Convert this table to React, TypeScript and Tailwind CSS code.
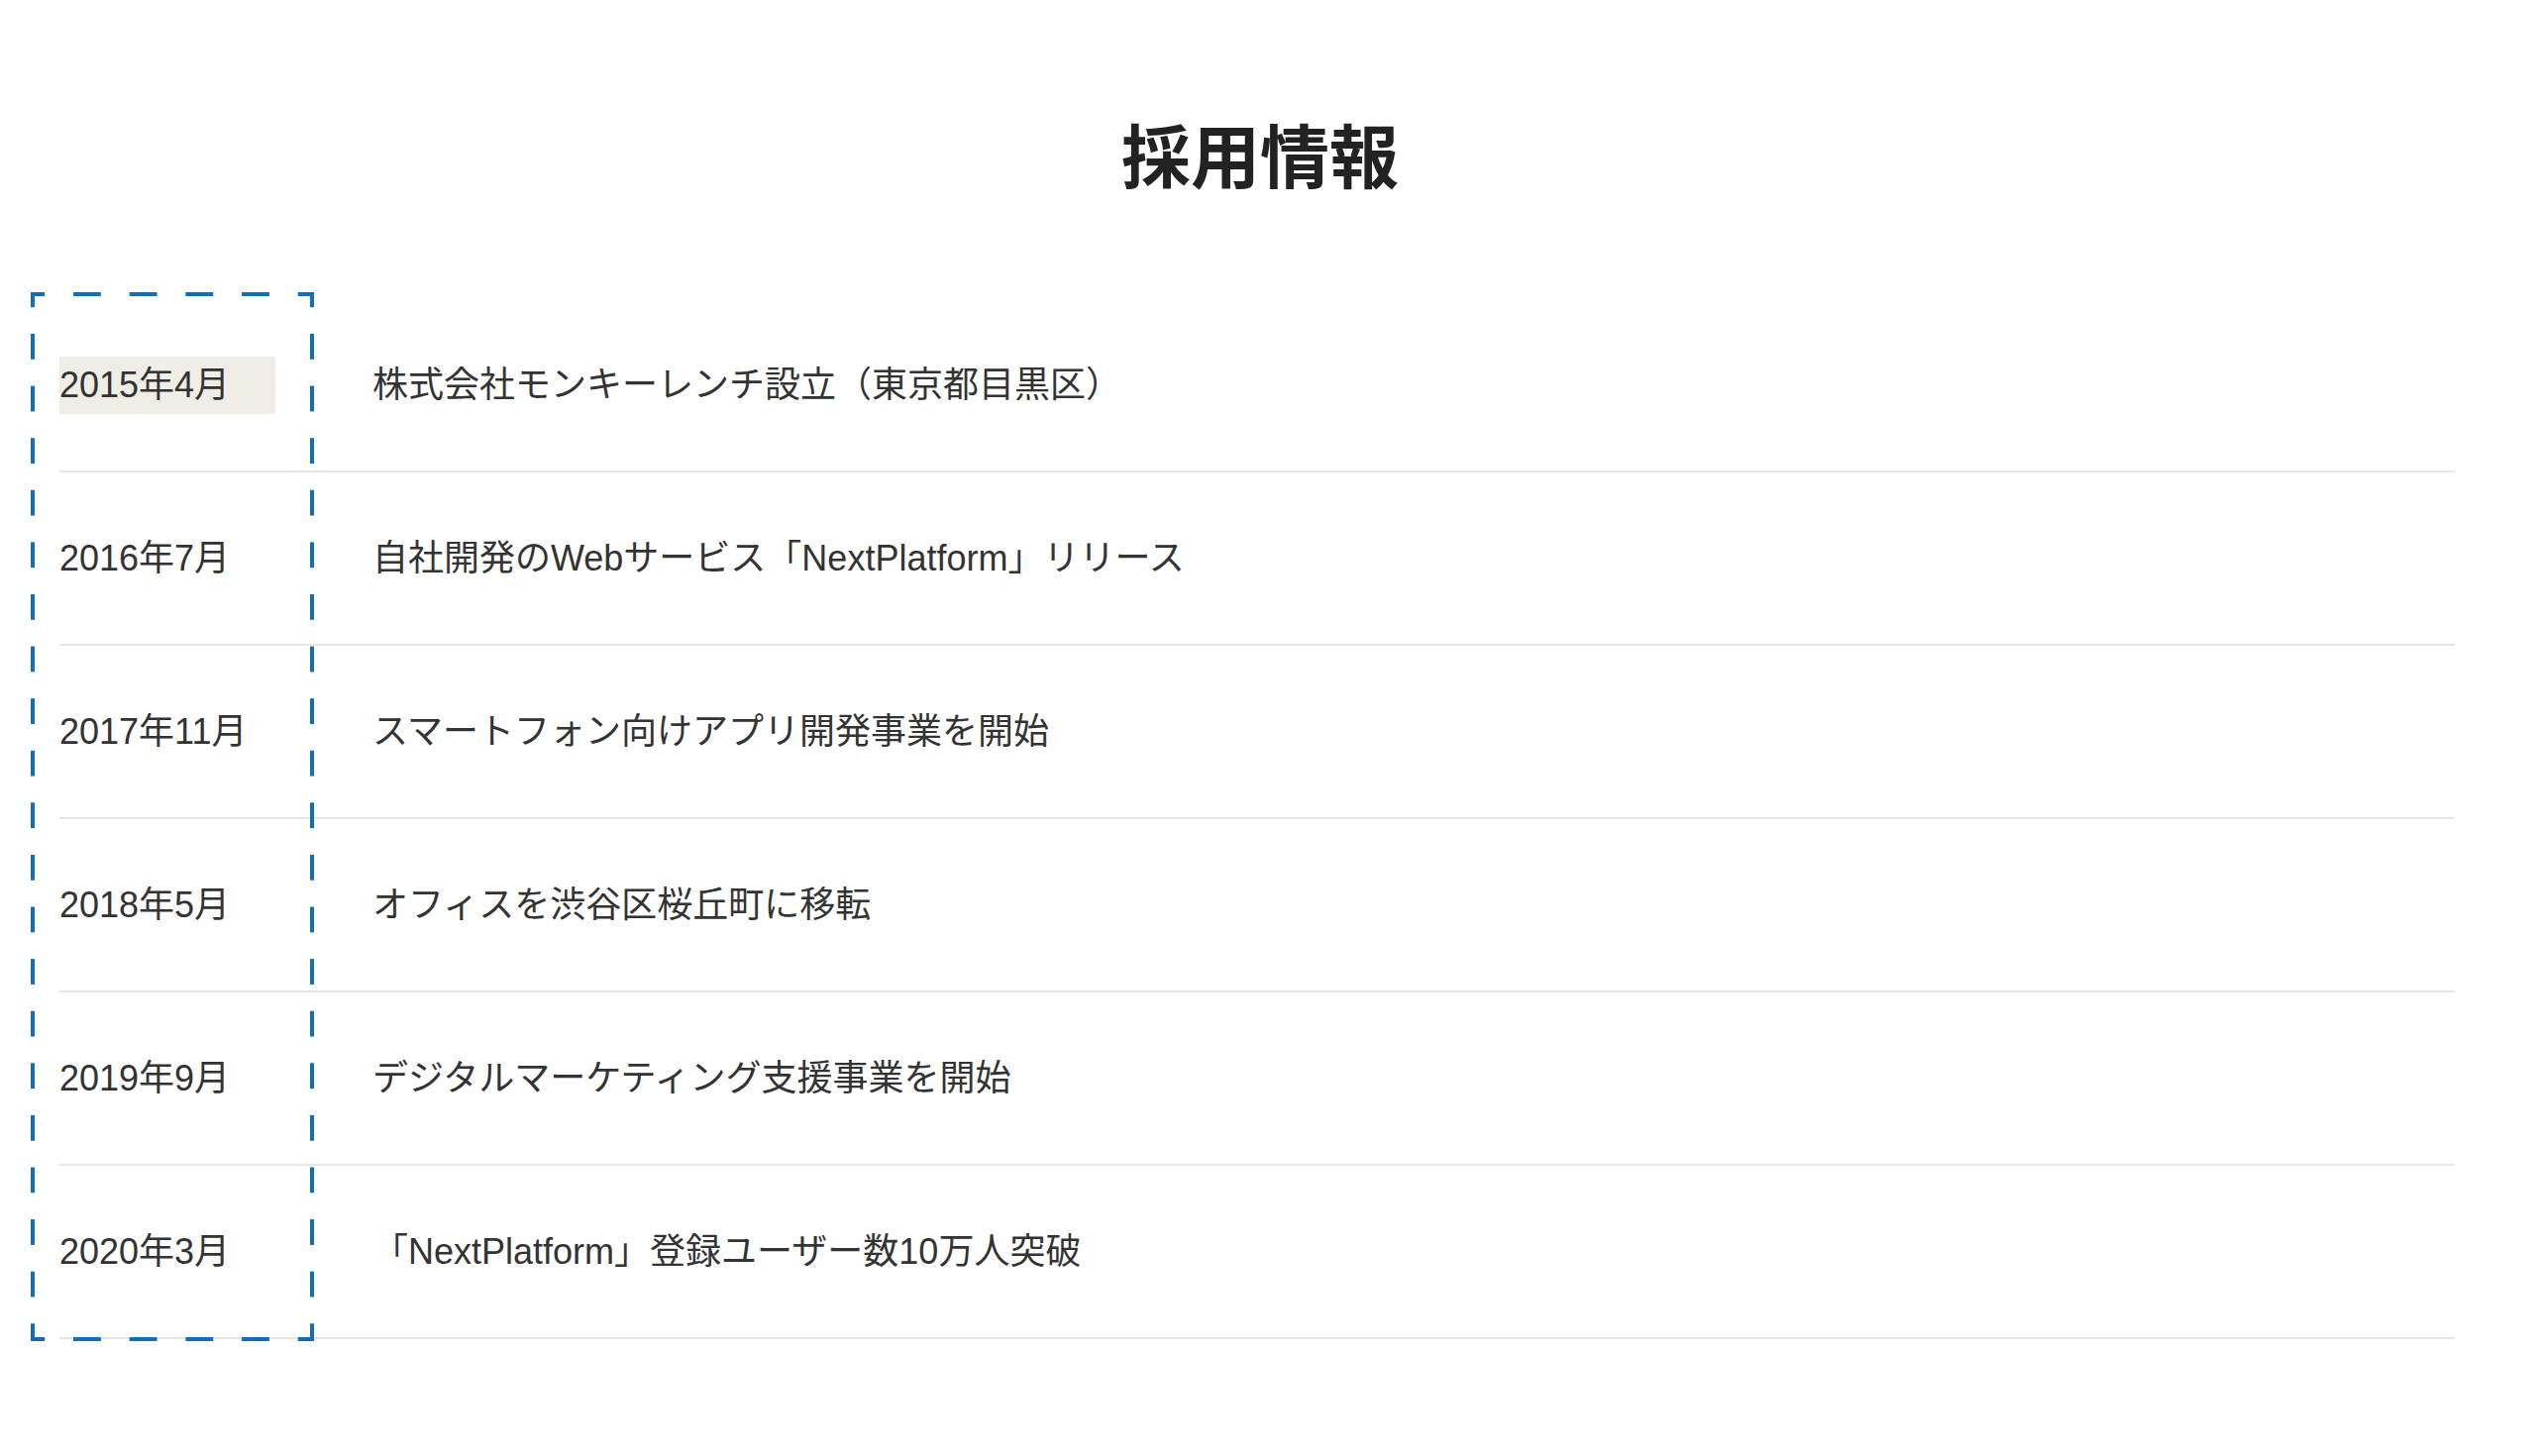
const history = [
  { date: "2015年4月", text: "株式会社モンキーレンチ設立（東京都目黒区）" },
  { date: "2016年7月", text: "自社開発のWebサービス「NextPlatform」リリース" },
  { date: "2017年11月", text: "スマートフォン向けアプリ開発事業を開始" },
  { date: "2018年5月", text: "オフィスを渋谷区桜丘町に移転" },
  { date: "2019年9月", text: "デジタルマーケティング支援事業を開始" },
  { date: "2020年3月", text: "「NextPlatform」登録ユーザー数10万人突破" },
];

const App = () => {
  return (
    <div className="min-h-screen bg-white font-['Liberation_Sans','Noto_Sans_CJK_JP',sans-serif] text-[#333333]">
      <h1 className="pt-[101px] pr-[6px] text-center text-[70px] font-bold leading-[108px] text-[#222222] font-['Noto_Sans_CJK_JP',sans-serif]">
        採用情報
      </h1>

      <div className="relative ml-[60px] mr-[72px] mt-[93px]">
        {/* dashed outline over the date column */}
        <div className="pointer-events-none absolute left-[-29px] top-[-7px] h-[1059px] w-[286px] [background-image:linear-gradient(to_right,#106ebe_50%,transparent_50%),linear-gradient(to_right,#106ebe_50%,transparent_50%),linear-gradient(to_bottom,#106ebe_50%,transparent_50%),linear-gradient(to_bottom,#106ebe_50%,transparent_50%)] [background-size:56.7px_4px,56.7px_4px,4px_52.6px,4px_52.6px] [background-position:-13.7px_0,-13.7px_100%,0_-10.6px,100%_-10.6px] [background-repeat:repeat-x,repeat-x,repeat-y,repeat-y]" />

        <dl>
          {history.map((item, idx) => (
            <div key={item.date} className="flex h-[175px] items-center border-b-2 border-[#e6e6ea]">
              <dt
                className={
                  idx === 0
                    ? "mr-[98px] w-[218px] bg-[#efede5] text-[36px] leading-[58px]"
                    : "mr-[98px] w-[218px] text-[36px] leading-[58px]"
                }
              >
                {item.date}
              </dt>
              <dd className="text-[36px] leading-[58px]">{item.text}</dd>
            </div>
          ))}
        </dl>
      </div>
    </div>
  );
};

export default App;
